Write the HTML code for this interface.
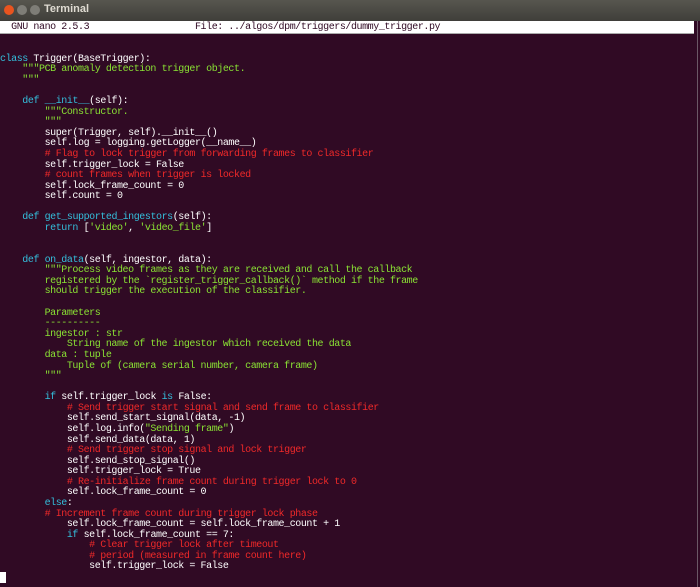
<!DOCTYPE html>
<html><head><style>
html,body{margin:0;padding:0;width:700px;height:587px;overflow:hidden;background:#300a24;}
#title{position:absolute;left:0;top:0;width:700px;height:21px;background:linear-gradient(#57564f,#3f3e3a);}
#title .t{position:absolute;left:44px;top:3px;font:bold 11px "Liberation Sans",sans-serif;color:#dfdbd2;}
.b{position:absolute;top:5px;width:10px;height:10px;border-radius:50%;}
#hdr{position:absolute;left:0;top:21px;width:694px;height:12px;background:#fff;border-bottom:1px solid #aaa;overflow:hidden;}
#hdr pre{top:2px;color:#300a24;line-height:10px;}
pre{position:absolute;left:0;top:23px;margin:0;font-family:"Liberation Mono",monospace;font-size:10px;line-height:10.58px;color:#fff;font-weight:normal;letter-spacing:-0.43px;}
.k{color:#34bfdc}.s{color:#8ae234}.c{color:#ef2929}
#cur{position:absolute;left:0;top:572px;width:6px;height:11px;background:#fff;}
#rb{position:absolute;left:697px;top:21px;width:1px;height:566px;background:#6b5866;}
</style></head><body>
<div id="title"><div class="b" style="left:4px;background:#e9541f"></div><div class="b" style="left:17px;background:#7e7d77"></div><div class="b" style="left:30px;background:#7e7d77"></div><div class="t">Terminal</div></div>
<div id="hdr"><pre>  GNU nano 2.5.3                   File: ../algos/dpm/triggers/dummy_trigger.py</pre></div><div id="rb"></div>
<pre>
&nbsp;
&nbsp;
&nbsp;
<span class="k">class</span> Trigger(BaseTrigger):
    <span class="s">"""PCB anomaly detection trigger object.</span>
<span class="s">    """</span>

    <span class="k">def</span> <span class="k">__init__</span>(self):
        <span class="s">"""Constructor.</span>
<span class="s">        """</span>
        super(Trigger, self).__init__()
        self.log = logging.getLogger(__name__)
        <span class="c"># Flag to lock trigger from forwarding frames to classifier</span>
        self.trigger_lock = False
        <span class="c"># count frames when trigger is locked</span>
        self.lock_frame_count = 0
        self.count = 0

    <span class="k">def</span> <span class="k">get_supported_ingestors</span>(self):
        <span class="k">return</span> [<span class="s">'video'</span>, <span class="s">'video_file'</span>]


    <span class="k">def</span> <span class="k">on_data</span>(self, ingestor, data):
<span class="s">        """Process video frames as they are received and call the callback
        registered by the `register_trigger_callback()` method if the frame
        should trigger the execution of the classifier.

        Parameters
        ----------
        ingestor : str
            String name of the ingestor which received the data
        data : tuple
            Tuple of (camera serial number, camera frame)
        """</span>

        <span class="k">if</span> self.trigger_lock <span class="k">is</span> False:
            <span class="c"># Send trigger start signal and send frame to classifier</span>
            self.send_start_signal(data, -1)
            self.log.info(<span class="s">"Sending frame"</span>)
            self.send_data(data, 1)
            <span class="c"># Send trigger stop signal and lock trigger</span>
            self.send_stop_signal()
            self.trigger_lock = True
            <span class="c"># Re-initialize frame count during trigger lock to 0</span>
            self.lock_frame_count = 0
        <span class="k">else</span>:
        <span class="c"># Increment frame count during trigger lock phase</span>
            self.lock_frame_count = self.lock_frame_count + 1
            <span class="k">if</span> self.lock_frame_count == 7:
                <span class="c"># Clear trigger lock after timeout</span>
                <span class="c"># period (measured in frame count here)</span>
                self.trigger_lock = False
</pre>
<div id="cur"></div>
</body></html>
